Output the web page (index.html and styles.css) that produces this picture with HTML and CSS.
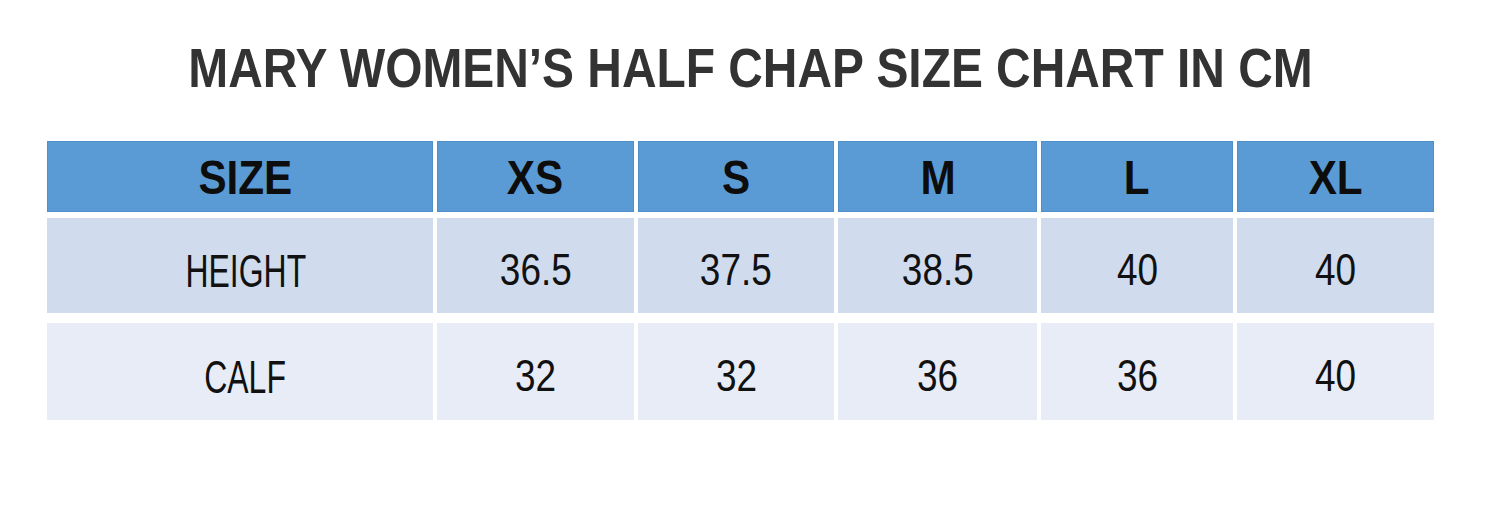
FILE: index.html
```html
<!DOCTYPE html>
<html lang="en">
<head>
    <meta charset="UTF-8">
    <title>Mary Women's Half Chap Size Chart</title>
    <link rel="stylesheet" href="styles.css">
</head>
<body>
<div class="chart">
    <h1 class="title"><span>MARY WOMEN’S HALF CHAP SIZE CHART IN CM</span></h1>
    <div class="table">
        <div class="row head">
            <div class="cell label"><span>SIZE</span></div>
            <div class="cell"><span>XS</span></div>
            <div class="cell"><span>S</span></div>
            <div class="cell"><span>M</span></div>
            <div class="cell"><span>L</span></div>
            <div class="cell"><span>XL</span></div>
        </div>
        <div class="row odd">
            <div class="cell label"><span>HEIGHT</span></div>
            <div class="cell"><span>36.5</span></div>
            <div class="cell"><span>37.5</span></div>
            <div class="cell"><span>38.5</span></div>
            <div class="cell"><span>40</span></div>
            <div class="cell"><span>40</span></div>
        </div>
        <div class="row even">
            <div class="cell label"><span>CALF</span></div>
            <div class="cell"><span>32</span></div>
            <div class="cell"><span>32</span></div>
            <div class="cell"><span>36</span></div>
            <div class="cell"><span>36</span></div>
            <div class="cell"><span>40</span></div>
        </div>
    </div>
</div>
</body>
</html>
```

FILE: styles.css
```css
*{margin: 0;padding: 0;box-sizing: border-box;}
body{background: #fff;font-family: "Liberation Sans", Arial, sans-serif;}
.chart{width: 1500px;height: 522px;padding-top: 36px;}
.title{font-size: 56px;line-height: 64px;font-weight: bold;color: #333;text-align: center;}
.title span{display: inline-block;transform: scaleX(.855);white-space: nowrap;}
.table{width: 1387px;margin: 41px 0 0 47px;display: flex;flex-direction: column;}
.row{display: grid;grid-template-columns: 386px 197px 196px 199px 192px 1fr;column-gap: 4px;}
.cell{display: flex;align-items: center;justify-content: center;}
.cell span{display: inline-block;white-space: nowrap;}
.row .label{padding-left: 11px;}
.head{height: 71px;}
.head .cell{background: #5b9bd5;box-shadow: inset 0 0 0 1px rgba(40,90,150,.18);font-size: 48px;font-weight: bold;color: #0d0d0d;padding-top: 2px;}
.head .cell span{transform: scaleX(.88);}
.odd{height: 95px;margin-top: 6px;}
.odd .cell{background: #d0dcee;}
.even{height: 97px;margin-top: 10px;}
.even .cell{background: #e8ecf6;}
.odd .cell, .even .cell{font-size: 44px;color: #111;padding-top: 9px;}
.odd .cell span, .even .cell span{transform: scaleX(.84);}
.odd .label span, .even .label span{font-size: 47px;transform: scaleX(.68);}
```
